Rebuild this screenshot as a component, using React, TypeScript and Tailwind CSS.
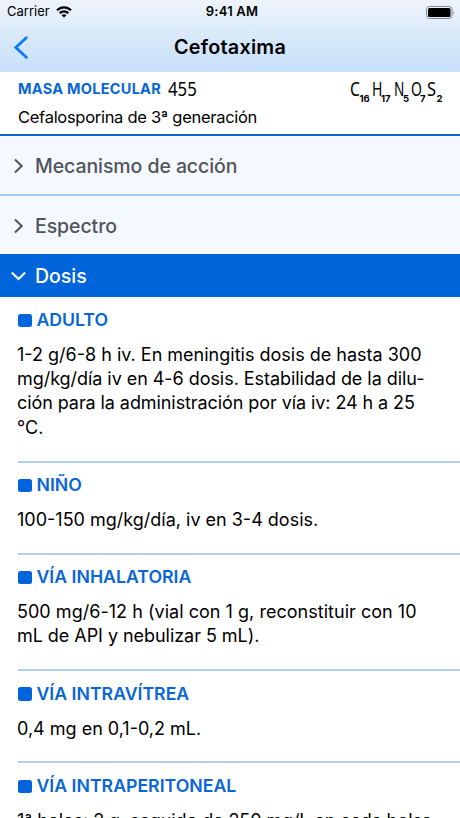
import type { ReactNode } from "react";

type Line = { text: string; className: string };
type Dose = { title: string; titleClass: string; lines: Line[] };

const doses: Dose[] = [
  {
    title: "ADULTO",
    titleClass: "tracking-[-0.05px]",
    lines: [
      { text: "1-2 g/6-8 h iv. En meningitis dosis de hasta 300", className: "tracking-[0px]" },
      { text: "mg/kg/día iv en 4-6 dosis. Estabilidad de la dilu-", className: "tracking-[-0.05px]" },
      { text: "ción para la administración por vía iv: 24 h a 25", className: "tracking-[-0.08px]" },
      { text: "°C.", className: "tracking-[0px]" },
    ],
  },
  {
    title: "NIÑO",
    titleClass: "tracking-[0px]",
    lines: [{ text: "100-150 mg/kg/día, iv en 3-4 dosis.", className: "tracking-[0px]" }],
  },
  {
    title: "VÍA INHALATORIA",
    titleClass: "tracking-[0px]",
    lines: [
      { text: "500 mg/6-12 h (vial con 1 g, reconstituir con 10", className: "tracking-[0.03px]" },
      { text: "mL de API y nebulizar 5 mL).", className: "tracking-[-0.05px]" },
    ],
  },
  {
    title: "VÍA INTRAVÍTREA",
    titleClass: "tracking-[0px]",
    lines: [{ text: "0,4 mg en 0,1-0,2 mL.", className: "tracking-[0px]" }],
  },
  {
    title: "VÍA INTRAPERITONEAL",
    titleClass: "tracking-[0px]",
    lines: [{ text: "1ª bolos: 2 g, seguido de 250 mg/L en cada bolsa", className: "tracking-[-0.1px]" }],
  },
];

const formula = [
  { element: "C", count: "16", letter: "scale-x-[0.78]", width: "w-[21.5px]" },
  { element: "H", count: "17", letter: "scale-x-[0.7]", width: "w-[22px]" },
  { element: "N", count: "5", letter: "scale-x-[0.68]", width: "w-[17px]" },
  { element: "O", count: "7", letter: "scale-x-[0.7]", width: "w-[16.5px]" },
  { element: "S", count: "2", letter: "scale-x-[0.82]", width: "w-[15px]" },
];

function CollapsedRow({ className, children }: { className: string; children: ReactNode }) {
  return (
    <div className={`flex shrink-0 items-center bg-[#f4f8ff] pt-px pl-[13px] text-[#515559] ${className}`}>
      <svg width="11" height="16" viewBox="0 0 11 16" fill="none" stroke="currentColor" strokeWidth="2">
        <path d="M2 1.5 8.7 8 2 14.5" />
      </svg>
      <span className="ml-[11px] text-[19.5px] leading-6 font-medium tracking-[-0.08px]">{children}</span>
    </div>
  );
}

export default function App() {
  return (
    <div className="flex h-[818px] w-[460px] flex-col overflow-hidden bg-white font-['Inter','Liberation_Sans',sans-serif] whitespace-nowrap text-black">
      <header className="h-[72px] shrink-0 bg-linear-to-b from-[#edf3fa] to-[#c5dff8]">
        <div className="grid h-6 grid-cols-3 items-center pr-[5px] pl-[7px]">
          <div className="flex items-center gap-[6px] text-[13px]">
            <span>Carrier</span>
            <svg width="16" height="12" viewBox="0 0 16 12" fill="none" stroke="black" strokeWidth="2.3">
              <path d="M1 4.3C5 .3 11 .3 15 4.3" />
              <path d="M3.7 7.2C6.2 4.9 9.8 4.9 12.3 7.2" />
              <path d="M8 11.6 5.6 9.2C7 8 9 8 10.4 9.2Z" fill="black" stroke="none" />
            </svg>
          </div>
          <span className="pl-[2px] text-center text-[13px] font-semibold tracking-[0.2px]">9:41 AM</span>
          <svg className="justify-self-end" width="29" height="13" viewBox="0 0 29 13">
            <rect x=".5" y=".5" width="25.5" height="12" rx="3" fill="none" stroke="#86898d" />
            <rect x="2" y="2" width="22.5" height="9" rx="1.5" fill="black" />
            <path d="M27.3 4.5q1.5 2 0 4z" fill="#86898d" />
          </svg>
        </div>
        <div className="grid h-12 grid-cols-[60px_1fr_60px] items-center">
          <svg className="ml-[13px]" width="16" height="24" viewBox="0 0 16 24" fill="none" stroke="#087bf5" strokeWidth="2.8" strokeLinecap="round">
            <path d="M13.3 1.7 2.8 11.5 13.3 21.3" />
          </svg>
          <h1 className="text-center text-[19.8px] font-semibold tracking-[0.25px]">Cefotaxima</h1>
        </div>
      </header>

      <section className="h-[64px] shrink-0 border-b-2 border-[#1265c9] pr-[18px] pl-[18px]">
        <div className="flex h-[34px] items-center justify-between">
          <div className="flex items-center">
            <span className="w-[150px] text-[14.5px] font-bold tracking-[0.27px] text-[#0866d4]">MASA MOLECULAR</span>
            <span className="origin-left scale-x-[0.86] font-['Noto_Sans',sans-serif] text-[19.5px]">455</span>
          </div>
          <div className="flex">
            {formula.map(({ element, count, letter, width }) => (
              <span key={element} className={`flex items-baseline ${width}`}>
                <span className="w-[9.5px]">
                  <span className={`inline-block origin-left font-['Noto_Sans',sans-serif] text-[20px] leading-6 ${letter}`}>
                    {element}
                  </span>
                </span>
                <sub className="relative top-[6px] text-[9.5px] leading-none font-bold">{count}</sub>
              </span>
            ))}
          </div>
        </div>
        <p className="text-[16.5px] leading-[23px] tracking-[-0.29px]">Cefalosporina de 3ª generación</p>
      </section>

      <CollapsedRow className="h-[60px] border-b-2 border-[#a9c9f0]">Mecanismo de acción</CollapsedRow>
      <CollapsedRow className="h-[58.4px]">Espectro</CollapsedRow>

      <div className="flex h-[42.3px] shrink-0 items-center bg-[#0064db] pl-[11px] text-white">
        <svg width="15" height="10" viewBox="0 0 15 10" fill="none" stroke="currentColor" strokeWidth="2">
          <path d="M.8 1.5 7.5 8 14.2 1.5" />
        </svg>
        <span className="ml-[9px] text-[19.5px] leading-6 font-medium">Dosis</span>
      </div>

      <main className="shrink-0 pt-[0.6px]">
        {doses.map((dose) => (
          <section key={dose.title} className="ml-[18px] border-b-2 border-[#b1cfec] pt-[11px] pb-[20.3px]">
            <h2 className="flex h-6 items-center gap-[5px] text-[17.7px] font-semibold text-[#0866d8]">
              <span className="size-[13.5px] rounded-[2.5px] bg-[#0064dd]" />
              <span className={dose.titleClass}>{dose.title}</span>
            </h2>
            <p className="-ml-px pt-[10.4px] text-[18px] leading-[24.4px]">
              {dose.lines.map((line) => (
                <span key={line.text} className="block">
                  <span className={line.className}>{line.text}</span>
                </span>
              ))}
            </p>
          </section>
        ))}
      </main>
    </div>
  );
}
